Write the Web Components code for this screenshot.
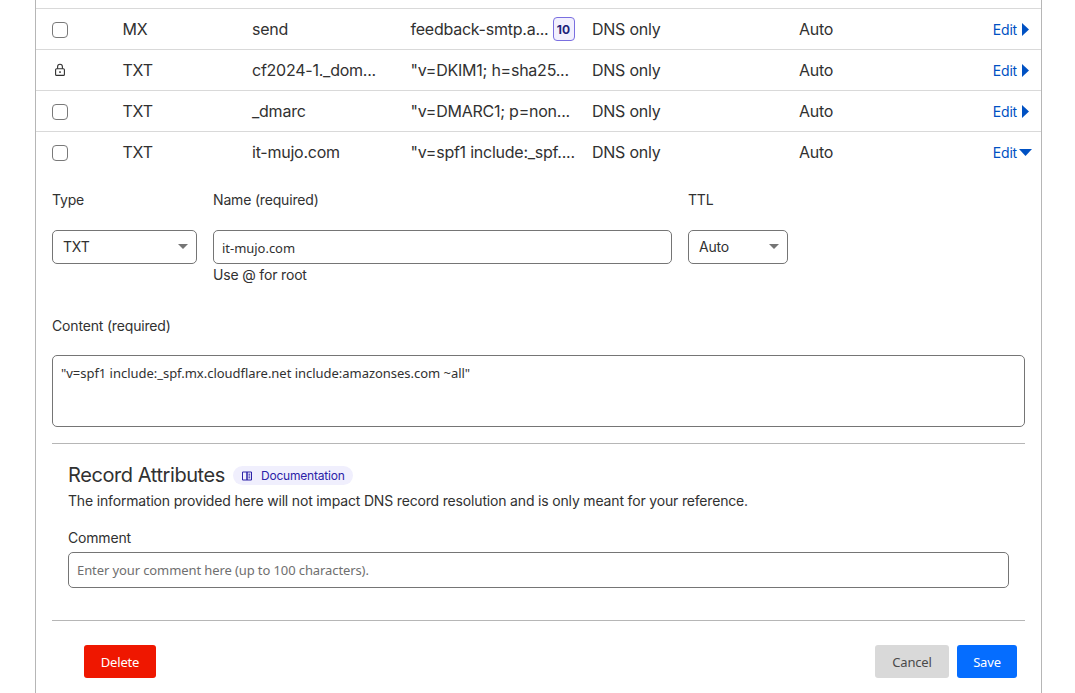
<!DOCTYPE html>
<html lang="en">
<head>
<meta charset="utf-8">
<title>DNS records</title>
<style>
html, body { margin: 0; height: 693px; overflow: hidden; background: #fff; }
body { font-family: Inter, "Liberation Sans", sans-serif; color: #313131; }
</style>
</head>
<body>
<dns-panel>
  <div style="height:8px"></div>
  <dns-row type="MX" name="send" content="feedback-smtp.a..." priority="10"></dns-row>
  <dns-row type="TXT" name="cf2024-1._dom..." content="&quot;v=DKIM1; h=sha25..." locked></dns-row>
  <dns-row type="TXT" name="_dmarc" content="&quot;v=DMARC1; p=non..."></dns-row>
  <dns-row type="TXT" name="it-mujo.com" content="&quot;v=spf1 include:_spf...." open></dns-row>
  <dns-record-form></dns-record-form>
</dns-panel>

<script>
const define = (tag, css, html, setup) => {
  customElements.define(tag, class extends HTMLElement {
    constructor() {
      super();
      this.attachShadow({ mode: "open" });
    }
    connectedCallback() {
      const markup = typeof html === "function" ? html(this) : html;
      this.shadowRoot.innerHTML = `<style>${css}</style>${markup}`;
      if (setup) setup(this);
    }
  });
};

define("dns-panel", `
:host {
  display: block;
  box-sizing: border-box;
  width: 1007px;
  height: 693px;
  overflow: hidden;
  margin-left: 35px;
  border-left: 1px solid #b6b6b6;
  border-right: 1px solid #b6b6b6;
}
`, `<slot></slot>`);

define("dns-row", `
:host {
  display: grid;
  grid-template-columns: 70.5px 129.5px 158.5px 181.5px 207px 1fr;
  align-items: center;
  box-sizing: border-box;
  height: 41px;
  padding: 0 12px 0 16px;
  border-top: 1px solid #d9d9d9;
  font-size: 16px;
  letter-spacing: -0.24px;
  color: #313131;
}
.check {
  display: block;
  box-sizing: border-box;
  width: 16px;
  height: 16px;
  margin-top: 1px;
  border: 1px solid #797979;
  border-radius: 4px;
  background: #fff;
}
.lock { display: block; margin-left: 2px; }
.content { display: flex; align-items: center; gap: 4px; white-space: nowrap; }
.badge {
  box-sizing: border-box;
  width: 22px;
  height: 24px;
  display: flex;
  align-items: center;
  justify-content: center;
  border: 1px solid #7a6fe0;
  border-radius: 4px;
  background: #f2f0fe;
  color: #1d1f7a;
  font-size: 12px;
  font-weight: 700;
  letter-spacing: 0;
}
.edit {
  display: flex;
  justify-content: flex-end;
  align-items: center;
  gap: 5px;
  font-size: 14px;
  letter-spacing: -0.2px;
  color: #0051c3;
}
:host([open]) .edit { gap: 2px; margin-right: -3px; }
svg { display: block; }
`, (el) => {
  const a = (n) => el.getAttribute(n) || "";
  const lock = `<svg class="lock" width="12" height="14" viewBox="0 0 12 14" fill="none" stroke="#313131" stroke-width="1.1">
    <rect x="1.6" y="5.8" width="8.8" height="6.6" rx="1"/><path d="M3.6 5.8V3.7a2.4 2.4 0 0 1 4.8 0v2.1"/><rect x="5.3" y="8.2" width="1.4" height="1.8" fill="#313131" stroke="none"/></svg>`;
  const right = `<svg width="7" height="13" viewBox="0 0 7 13"><path d="M0 0l7 6.5L0 13z" fill="#0051c3"/></svg>`;
  const down = `<svg width="13" height="7" viewBox="0 0 13 7"><path d="M0 0h13L6.5 7z" fill="#0051c3"/></svg>`;
  return `
    <div>${el.hasAttribute("locked") ? lock : `<span class="check"></span>`}</div>
    <div>${a("type")}</div>
    <div>${a("name")}</div>
    <div class="content"><span>${a("content")}</span>${a("priority") ? `<span class="badge">${a("priority")}</span>` : ""}</div>
    <div>DNS only</div>
    <div style="display:flex;justify-content:space-between"><span>Auto</span><span class="edit">Edit ${el.hasAttribute("open") ? down : right}</span></div>`;
});

define("dns-select", `
:host {
  display: flex;
  align-items: center;
  justify-content: space-between;
  box-sizing: border-box;
  height: 34px;
  padding: 0 8px 2px 10px;
  border: 1px solid #757575;
  border-radius: 5px;
  background: #fff;
  font-size: 14px;
  color: #313131;
}
svg { display: block; }
`, `<slot></slot><svg width="10" height="5" viewBox="0 0 10 5"><path d="M0 0h10L5 5z" fill="#757575"/></svg>`);

define("dns-input", `
:host {
  display: flex;
  align-items: center;
  box-sizing: border-box;
  height: 34px;
  padding: 1px 8px 0;
  border: 1px solid #757575;
  border-radius: 5px;
  background: #fff;
  font-family: "Noto Sans", sans-serif;
  font-size: 13px;
  letter-spacing: -0.03px;
  color: #313131;
}
:host([area]) { align-items: flex-start; height: 72px; padding-top: 8px; }
:host([placeholder]) { color: #6f6f6f; padding-top: 0; letter-spacing: -0.1px; }
`, `<slot></slot>`);

define("doc-chip", `
:host {
  display: inline-flex;
  align-items: center;
  gap: 9px;
  box-sizing: border-box;
  height: 19px;
  padding: 0 8px 0 9px;
  border-radius: 10px;
  background: #f0effd;
  font-size: 12px;
  letter-spacing: -0.2px;
  color: #2c23a8;
}
svg { display: block; }
`, `<svg width="10" height="10" viewBox="0 0 10 10" fill="none" stroke="#2c23a8" stroke-width="1">
  <path d="M.5 1h4.500v8H.5zM5 1h4.500v8H5z"/><path d="M6.500 3.200h1.700M6.500 5h1.700M6.500 6.800h1.700"/></svg><slot></slot>`);

define("dns-button", `
:host {
  display: flex;
  align-items: center;
  justify-content: center;
  box-sizing: border-box;
  height: 33px;
  border-radius: 3px;
  font-family: "Noto Sans", sans-serif;
  font-size: 13px;
  color: #fff;
  cursor: pointer;
}
:host([kind="delete"]) { width: 72px; background: #ef1700; }
:host([kind="cancel"]) { width: 74px; background: #d9d9d9; color: #4a4a4a; }
:host([kind="save"]) { width: 60px; background: #056dff; }
`, `<slot></slot>`);

define("dns-record-form", `
:host {
  display: block;
  padding: 0 16px;
  font-size: 14px;
  letter-spacing: -0.17px;
  color: #313131;
}
.fields {
  display: grid;
  grid-template-columns: 145px 459px 100px;
  column-gap: 16px;
  padding-top: 19px;
}
.label { height: 17px; line-height: 17px; margin-bottom: 22px; }
.hint { margin-top: 2px; line-height: 17px; }
.content { margin-top: 34px; }
.content .label { margin-bottom: 21px; }
hr { height: 1px; margin: 0; border: 0; background: #b6b6b6; }
.content + hr { margin-top: 16px; }
.attrs { padding: 20px 16px 32px; }
.title { display: flex; align-items: center; gap: 8px; height: 23px; }
h3 { margin: 0; font-size: 20px; line-height: 23px; font-weight: 400; letter-spacing: -0.42px; color: #313131; }
p { margin: 5px 0 0; line-height: 17px; }
.comment { margin: 20px 0 6px; line-height: 17px; }
dns-input.comment-box { height: 36px; }
.actions {
  display: flex;
  justify-content: space-between;
  padding: 24px 8px 0 32px;
}
.right { display: flex; gap: 8px; }
`, `
<div class="fields">
  <div><div class="label">Type</div><dns-select>TXT</dns-select></div>
  <div><div class="label">Name (required)</div><dns-input>it-mujo.com</dns-input><div class="hint">Use @ for root</div></div>
  <div><div class="label">TTL</div><dns-select>Auto</dns-select></div>
</div>
<div class="content">
  <div class="label">Content (required)</div>
  <dns-input area>"v=spf1 include:_spf.mx.cloudflare.net include:amazonses.com ~all"</dns-input>
</div>
<hr>
<div class="attrs">
  <div class="title"><h3>Record Attributes</h3><doc-chip>Documentation</doc-chip></div>
  <p>The information provided here will not impact DNS record resolution and is only meant for your reference.</p>
  <div class="comment">Comment</div>
  <dns-input class="comment-box" placeholder>Enter your comment here (up to 100 characters).</dns-input>
</div>
<hr>
<div class="actions">
  <dns-button kind="delete">Delete</dns-button>
  <div class="right"><dns-button kind="cancel">Cancel</dns-button><dns-button kind="save">Save</dns-button></div>
</div>
`);
</script>
</body>
</html>
